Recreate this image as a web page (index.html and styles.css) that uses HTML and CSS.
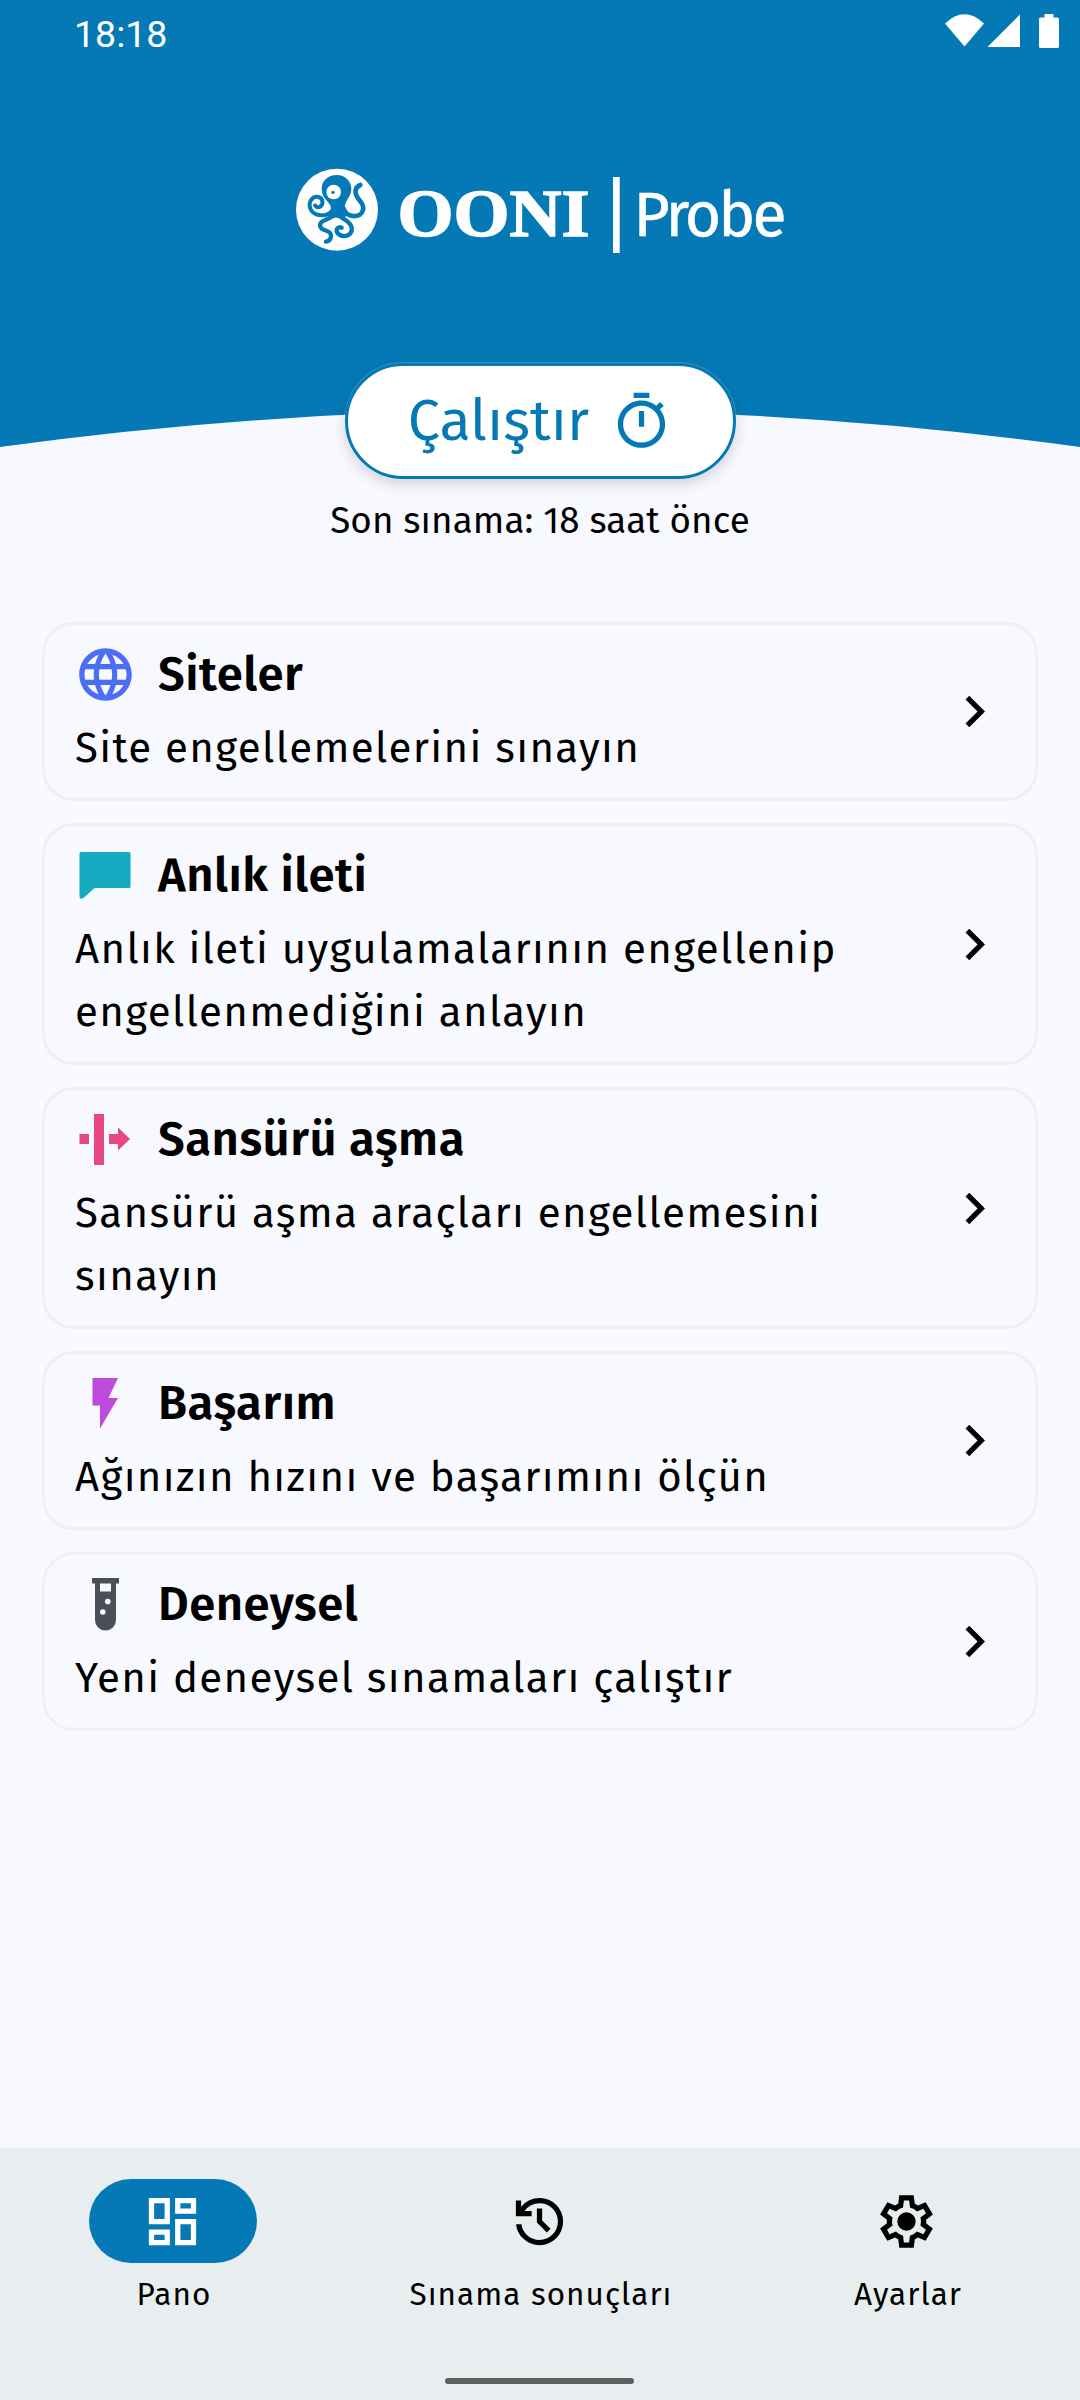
FILE: index.html
```html
<!DOCTYPE html>
<html lang="tr">
<head>
<meta charset="utf-8">
<title>OONI Probe</title>
<link rel="stylesheet" href="styles.css">
</head>
<body>
<div class="app">
  <header class="header">
    <svg class="curve" viewBox="0 0 1080 448" preserveAspectRatio="none"><path d="M0 0H1080V447Q540 373 0 447Z" fill="#0579b5"/></svg>
    <div class="status">
      <span class="clock">18:18</span>
      <svg class="status-icons" viewBox="0 0 120 40" fill="#fff">
        <path d="M5 13.500Q24.500 -5 44 13.500L24.500 36.500Z"/>
        <path d="M80 4.500V37H47.500Z"/>
        <path d="M104.500 4h9v3.500h4a1.500 1.500 0 0 1 1.500 1.500v27.500a1.500 1.500 0 0 1-1.500 1.500h-17a1.500 1.500 0 0 1-1.500-1.500v-27.500a1.500 1.500 0 0 1 1.500-1.500h4z"/>
      </svg>
    </div>
    <svg class="logo" viewBox="0 0 490 90">
      <circle cx="42" cy="44.700" r="41" fill="#fff"/>
      <g transform="translate(-15 -15) scale(.33333)" fill="none" stroke="#0579b5" stroke-width="13" stroke-linecap="round">
        <path fill="#0579b5" stroke="none" d="M170 75C196 75 214 94 214 117C214 134 203 146 197 158C192 170 196 184 204 194L190 205L172 203L154 203L140 196C150 187 156 174 150 164C142 151 125 140 125 116C125 93 144 75 170 75Z"/>
        <path d="M191 176C200 205 243 205 249 180C256 154 221 148 227 120Q229 110 241 105" stroke-width="14"/>
        <path d="M154 185C137 202 103 199 92 178C82 156 98 137 116 141C130 145 132 166 118 171Q110 173 105 166" stroke-width="12"/>
        <path d="M159 198C140 212 116 211 121 230C126 246 151 237 153 256Q154 271 138 275"/>
        <path d="M177 197C191 209 211 213 215 233C218 256 193 264 178 254C164 244 170 227 185 233"/>
        <circle cx="161" cy="126" r="22" fill="#fff" stroke="none"/>
        <circle cx="159" cy="127" r="5" fill="#0579b5" stroke="none"/>
      </g>
      <text class="logo-ooni" x="102.500" y="70.500" textLength="192" lengthAdjust="spacingAndGlyphs">OONI</text>
      <rect x="318" y="12" width="6.700" height="76" fill="#fff"/>
      <text class="logo-probe" x="338.500" y="70.500" textLength="150" lengthAdjust="spacingAndGlyphs">Probe</text>
    </svg>
  </header>

  <section class="run">
    <button class="run-button">
      <span class="run-label">Çalıştır</span>
      <svg class="icon" viewBox="0 0 24 24"><path d="M15 1H9v2h6V1zm-4 13h2V8h-2v6zm8.030-6.610 1.420-1.420c-.43-.51-.9-.99-1.410-1.410l-1.420 1.420C16.070 4.740 14.120 4 12 4c-4.970 0-9 4.030-9 9s4.020 9 9 9 9-4.030 9-9c0-2.120-.74-4.070-1.970-5.610zM12 20c-3.870 0-7-3.130-7-7s3.130-7 7-7 7 3.130 7 7-3.130 7-7 7z"/></svg>
    </button>
    <p class="last-test">Son sınama: 18 saat önce</p>
  </section>

  <main class="cards">
    <article class="card">
      <div class="card-body">
        <h2 class="card-title"><svg class="icon globe" viewBox="0 0 24 24"><path d="M11.990 2C6.470 2 2 6.480 2 12s4.470 10 9.990 10C17.520 22 22 17.520 22 12S17.520 2 11.990 2zm6.930 6h-2.950c-.32-1.250-.78-2.450-1.380-3.560 1.840.63 3.370 1.910 4.330 3.560zM12 4.040c.83 1.200 1.480 2.530 1.910 3.960h-3.820c.43-1.430 1.080-2.760 1.910-3.960zM4.260 14C4.100 13.360 4 12.690 4 12s.1-1.360.26-2h3.380c-.08.66-.14 1.320-.14 2 0 .68.06 1.340.14 2H4.260zm.82 2h2.950c.32 1.250.78 2.450 1.380 3.560-1.840-.63-3.370-1.900-4.330-3.560zm2.950-8H5.080c.96-1.660 2.490-2.930 4.330-3.560C8.810 5.550 8.350 6.750 8.030 8zM12 19.960c-.83-1.200-1.480-2.530-1.910-3.960h3.820c-.43 1.430-1.080 2.760-1.910 3.960zM14.340 14H9.660c-.09-.66-.16-1.320-.16-2 0-.68.07-1.350.16-2h4.680c.09.65.16 1.320.16 2 0 .68-.07 1.340-.16 2zm.25 5.560c.6-1.110 1.060-2.310 1.380-3.560h2.950c-.96 1.650-2.490 2.930-4.330 3.560zM16.360 14c.08-.66.14-1.320.14-2 0-.68-.06-1.340-.14-2h3.380c.16.64.26 1.310.26 2s-.1 1.360-.26 2h-3.380z"/></svg><span>Siteler</span></h2>
        <p class="card-text">Site engellemelerini sınayın</p>
      </div>
      <svg class="icon" viewBox="0 0 24 24"><path d="M10 6 8.590 7.410 13.170 12l-4.580 4.590L10 18l6-6z"/></svg>
    </article>
    <article class="card">
      <div class="card-body">
        <h2 class="card-title"><svg class="icon chat" viewBox="0 0 63 63"><path d="M7 8H55Q56.500 8 56.500 9.500V42.500Q56.500 44 55 44H20.500L10 53.500Q5.500 56.500 5.500 52V9.500Q5.500 8 7 8Z"/></svg><span>Anlık ileti</span></h2>
        <p class="card-text">Anlık ileti uygulamalarının engellenip<br>engellenmediğini anlayın</p>
      </div>
      <svg class="icon" viewBox="0 0 24 24"><path d="M10 6 8.590 7.410 13.170 12l-4.580 4.590L10 18l6-6z"/></svg>
    </article>
    <article class="card">
      <div class="card-body">
        <h2 class="card-title"><svg class="icon bypass" viewBox="0 0 63 63"><path d="M5.500 26H15V36H5.500ZM20 6H30V57H20ZM35 26H44V19.500L56 31L44 42.500V36H35Z"/></svg><span>Sansürü aşma</span></h2>
        <p class="card-text">Sansürü aşma araçları engellemesini<br>sınayın</p>
      </div>
      <svg class="icon" viewBox="0 0 24 24"><path d="M10 6 8.590 7.410 13.170 12l-4.580 4.590L10 18l6-6z"/></svg>
    </article>
    <article class="card">
      <div class="card-body">
        <h2 class="card-title"><svg class="icon bolt" viewBox="0 0 63 63"><path d="M18.500 6H44L34.500 26H44L26 56.500V33.500H18.500Z"/></svg><span>Başarım</span></h2>
        <p class="card-text">Ağınızın hızını ve başarımını ölçün</p>
      </div>
      <svg class="icon" viewBox="0 0 24 24"><path d="M10 6 8.590 7.410 13.170 12l-4.580 4.590L10 18l6-6z"/></svg>
    </article>
    <article class="card">
      <div class="card-body">
        <h2 class="card-title"><svg class="icon tube" viewBox="0 0 63 63"><path fill-rule="evenodd" d="M18 5H45V10.500H42V47A10.500 10.500 0 0 1 21 47V10.500H18ZM26 10.500V18.500H37V10.500ZM31 28.500a2.800 2.800 0 1 0 5.600 0a2.800 2.800 0 1 0-5.600 0ZM26 39a2.800 2.800 0 1 0 5.600 0a2.800 2.800 0 1 0-5.600 0Z"/></svg><span>Deneysel</span></h2>
        <p class="card-text">Yeni deneysel sınamaları çalıştır</p>
      </div>
      <svg class="icon" viewBox="0 0 24 24"><path d="M10 6 8.590 7.410 13.170 12l-4.580 4.590L10 18l6-6z"/></svg>
    </article>
  </main>

  <footer class="bottom">
    <nav class="nav">
      <a class="nav-item">
        <span class="nav-pill active"><svg class="icon" viewBox="0 0 24 24"><path fill-rule="evenodd" d="M3 3h8v10H3zM5 5v6h4V5zM13 3h8v6h-8zM15 5v2h4V5zM13 11h8v10h-8zM15 13v6h4v-6zM3 15h8v6H3zM5 17v2h4v-2z"/></svg></span>
        <span class="nav-label">Pano</span>
      </a>
      <a class="nav-item">
        <span class="nav-pill"><svg class="icon" viewBox="0 0 24 24"><path d="M12 21q-3.450 0-6.013-2.288Q3.425 16.425 3.050 13H5.100q.35 2.600 2.313 4.300Q9.375 19 12 19q2.925 0 4.963-2.037Q19 14.925 19 12t-2.037-4.963Q14.925 5 12 5q-1.725 0-3.225.8T6.250 8H9v2H3V4h2v2.350q1.275-1.600 3.113-2.475Q9.950 3 12 3q1.875 0 3.513.712 1.637.713 2.850 1.925 1.212 1.213 1.925 2.850Q21 10.125 21 12t-.712 3.512q-.713 1.638-1.925 2.850-1.213 1.213-2.850 1.926Q13.875 21 12 21Zm2.800-4.800L11 12.400V7h2v4.600l3.200 3.200Z"/></svg></span>
        <span class="nav-label">Sınama sonuçları</span>
      </a>
      <a class="nav-item">
        <span class="nav-pill"><svg class="icon" viewBox="0 0 24 24"><path fill-rule="evenodd" d="M9.250 22l-.4-3.200q-.325-.125-.612-.3-.288-.175-.563-.375L4.700 19.375l-2.750-4.750 2.575-1.950Q4.500 12.500 4.500 12.337v-.675q0-.162.025-.337L1.950 9.375l2.750-4.750 2.975 1.250q.275-.2.575-.375.3-.175.6-.3l.4-3.200h5.500l.4 3.200q.325.125.613.3.287.175.562.375l2.975-1.250 2.750 4.750-2.575 1.950q.025.175.025.337v.675q0 .163-.05.338l2.575 1.950-2.750 4.750-2.950-1.250q-.275.2-.575.375-.3.175-.6.3l-.4 3.200ZM11 20h1.975l.35-2.650q.775-.2 1.438-.588.662-.387 1.212-.937l2.475 1.025.975-1.700-2.150-1.625q.125-.35.175-.737.05-.388.05-.788t-.05-.788q-.05-.387-.175-.737l2.150-1.625-.975-1.700-2.475 1.050q-.55-.575-1.212-.963-.663-.387-1.438-.587L13 4h-1.975l-.35 2.650q-.775.2-1.437.587-.663.388-1.213.938L5.550 7.150l-.975 1.700 2.150 1.600q-.125.375-.175.75-.05.375-.05.8 0 .4.05.775t.175.75l-2.150 1.625.975 1.700 2.475-1.050q.55.575 1.213.963.662.387 1.437.587Z"/><circle cx="12" cy="12" r="3.500"/></svg></span>
        <span class="nav-label">Ayarlar</span>
      </a>
    </nav>
    <div class="gesture"></div>
  </footer>
</div>
</body>
</html>
```
FILE: styles.css
```css
* { box-sizing: border-box; }
body {
  margin: 0;
  background: #f8f9ff;
  color: #000;
  font-family: "Fira Sans", "Open Sans", "Noto Sans", sans-serif;
}
h2, p { margin: 0; }
.app {
  width: 1080px;
  height: 2400px;
  display: flex;
  flex-direction: column;
  overflow: hidden;
}
.icon { display: block; width: 63px; height: 63px; flex: none; fill: currentColor; }

.header { position: relative; height: 363px; flex: none; }
.curve { position: absolute; left: 0; top: 0; width: 1080px; height: 448px; }
.status {
  position: relative;
  height: 165px;
  display: flex;
  justify-content: space-between;
  align-items: flex-start;
  padding: 10px 20px 0 74px;
  color: #fff;
}
.clock { font: 37.500px/48px Roboto, sans-serif; }
.status-icons { width: 120px; height: 40px; }
.logo { position: relative; display: block; width: 490px; height: 90px; margin-left: 295px; overflow: visible; }
.logo text { fill: #fff; }
.logo-ooni { font: bold 68px "Liberation Serif", serif; stroke: #fff; stroke-width: 1.500; }
.logo-probe { font-size: 63px; letter-spacing: -3px; stroke: #fff; stroke-width: .5; }

.run { position: relative; display: flex; flex-direction: column; align-items: center; height: 259px; flex: none; }
.run-button {
  width: 391px;
  height: 116px;
  padding: 0 0 0 1px;
  display: flex;
  align-items: center;
  justify-content: center;
  gap: 21px;
  border: 3px solid #0579b5;
  border-radius: 58px;
  background: #fff;
  color: #0579b5;
  font-family: inherit;
  box-shadow: 0 0 0 1px rgba(255, 255, 255, .2), 0 5px 14px rgba(0, 0, 0, .16);
}
.run-label { font-size: 57.500px; line-height: 80px; }
.last-test { margin-top: 17px; font-size: 36.750px; line-height: 50px; letter-spacing: .1px; white-space: nowrap; }

.cards { display: flex; flex-direction: column; gap: 22px; padding: 0 42px; flex: 1; }
.card {
  display: flex;
  align-items: center;
  justify-content: space-between;
  padding: 18px 29px 18px 30px;
  border: 3px solid #f0f0f1;
  border-radius: 32px;
}
.card-body { display: flex; flex-direction: column; gap: 11px; }
.card-title {
  display: flex;
  align-items: center;
  gap: 21px;
  height: 63px;
  margin-left: -1px;
  font-size: 47.250px;
  line-height: 63px;
  font-weight: 600;
  letter-spacing: .5px;
}
.card-text { font-size: 42px; line-height: 63px; letter-spacing: 1.360px; white-space: nowrap; }
.globe { color: #4c6ef5; }
.chat { color: #15aabf; }
.bypass { color: #e64980; }
.bolt { color: #be4bdb; }
.tube { color: #495057; }

.bottom { height: 252px; flex: none; background: #e8eef0; display: flex; flex-direction: column; align-items: center; }
.nav { width: 1080px; display: flex; gap: 21px; padding-top: 31px; height: 230px; }
.nav-item { flex: 1; display: flex; flex-direction: column; align-items: center; gap: 11px; }
.nav-pill { width: 168px; height: 84px; border-radius: 42px; display: flex; align-items: center; justify-content: center; padding-right: 1px; }
.active { background: #0579b5; color: #fff; }
.nav-label { font-size: 31.500px; line-height: 42px; letter-spacing: 1.050px; padding-left: 2px; white-space: nowrap; }
.gesture { width: 189px; height: 6px; margin-right: 1px; border-radius: 3px; background: #5b605f; }
```
